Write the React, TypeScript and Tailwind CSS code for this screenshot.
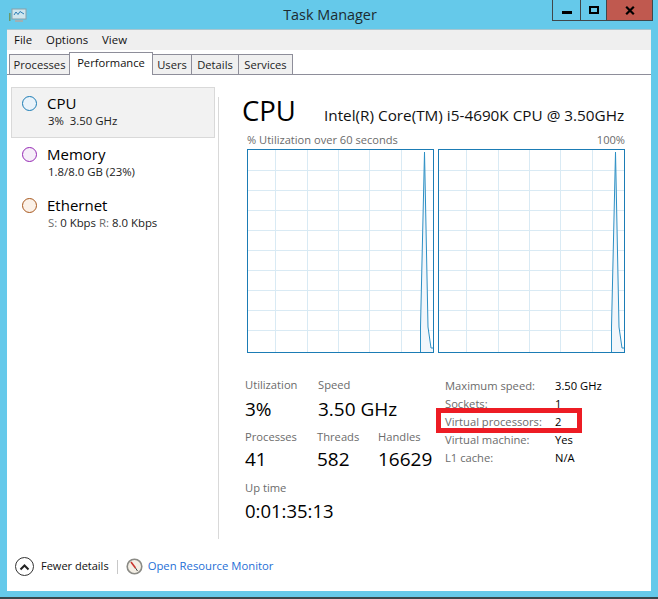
const FONT = "font-['Open_Sans',sans-serif]";

function Chart() {
  const xs = [28, 60, 91, 122, 154];
  const ys = [21, 41, 61, 81, 101, 121, 141, 161, 181];
  return (
    <svg width="187" height="204" viewBox="0 0 187 204" className="block">
      <rect x="0" y="0" width="187" height="204" fill="#ffffff" />
      {xs.map((x) => (
        <line key={x} x1={x + 0.5} x2={x + 0.5} y1="1" y2="203" stroke="#d9eaf4" strokeWidth="1" />
      ))}
      {ys.map((y) => (
        <line key={y} x1="1" x2="186" y1={y + 0.5} y2={y + 0.5} stroke="#d9eaf4" strokeWidth="1" />
      ))}
      <path d="M173.5 203 L173.5 178 L177.5 3 L181 178 L184 199 L186 199 L186 203 Z" fill="#f1f6fb" />
      <path d="M173.5 203 L173.5 178 L177.5 3 L181 178 L184 199 L186 199" fill="none" stroke="#2c8fc4" strokeWidth="1" />
      <rect x="0.5" y="0.5" width="186" height="203" fill="none" stroke="#1b7cb5" strokeWidth="1" />
    </svg>
  );
}

function Ring({ border, fill }: { border: string; fill: string }) {
  return <span className={`w-[15px] h-[15px] rounded-full border-[1.5px] shrink-0 ${border} ${fill}`} />;
}

function SideItem({ ring, title, children, active }: { ring: React.ReactNode; title: string; children: React.ReactNode; active?: boolean }) {
  return (
    <div className={`h-[51px] flex border ${active ? 'bg-[#f2f2f2] border-[#d9d9d9]' : 'border-transparent'}`}>
      <div className="w-[35px] pl-[10px] pt-[8px] flex items-start">{ring}</div>
      <div className="flex flex-col">
        <span className="text-[15px] leading-[20px] mt-[5px] mb-[1px] text-black">{title}</span>
        <span className="text-[11.4px] leading-[14px] ml-[1px] text-[#222] whitespace-nowrap">{children}</span>
      </div>
    </div>
  );
}

function Stat({ label, value, w, size = 'text-[19px]', mt = 'mt-[3px]' }: { label: string; value: string; w?: string; size?: string; mt?: string }) {
  return (
    <div className={`flex flex-col ${w ?? ''}`}>
      <span className="text-[11.2px] leading-[16px] text-[#6b6b6b] whitespace-nowrap">{label}</span>
      <span className={`${size} ${mt} leading-[26px] text-black whitespace-nowrap`}>{value}</span>
    </div>
  );
}

function Spec({ k, v }: { k: string; v: string }) {
  return (
    <div className="flex h-[18px] items-center">
      <span className="w-[110px] text-[#6b6b6b] whitespace-nowrap">{k}</span>
      <span className="text-black whitespace-nowrap">{v}</span>
    </div>
  );
}

function Tab({ label, w }: { label: string; w: string }) {
  return (
    <div className={`${w} h-[20px] mt-[4px] pt-[1px] border border-[#8e8e9a] border-b-0 bg-[#f0f0f0] -ml-px first:ml-0 flex items-center justify-center text-[11.2px] text-[#222]`}>
      {label}
    </div>
  );
}

export default function App() {
  return (
    <div className={`${FONT} relative w-[658px] h-[599px] bg-[#65c9ea] flex flex-col overflow-hidden`}>
      {/* title bar */}
      <div className="h-[29px] shrink-0 flex items-start relative">
        <svg width="18" height="16" viewBox="0 0 18 16" className="ml-[9px] mt-[8px]">
          <rect x="3" y="1" width="14" height="10" fill="#cfe6ee" stroke="#8aa0a8" />
          <path d="M5 7 L7 4 L9 6.5 L11 3.5 L15 6" fill="none" stroke="#2f7fb5" />
          <rect x="6" y="12" width="8" height="2" fill="#9fb0b5" />
          <rect x="0" y="5" width="1.5" height="8" fill="#6a9a6a" />
        </svg>
        <div className="flex-1 text-center text-[14.4px] leading-[29px] text-[#1c2b30] pl-[81px]">Task Manager</div>
        <div className="flex h-[21px] w-[101px] mr-[5px] border border-t-0 border-[#40474a] shrink-0">
          <div className="w-[28px] border-r border-[#40474a] flex items-center justify-center">
            <span className="w-[10px] h-[3px] bg-black mt-[5px]" />
          </div>
          <div className="w-[26px] border-r border-[#40474a] flex items-center justify-center">
            <span className="w-[10px] h-[8px] border-2 border-black" />
          </div>
          <div className="flex-1 bg-[#c0594f] flex items-center justify-center">
            <svg width="10" height="9" viewBox="0 0 10 9"><path d="M1.2 0.8 L8.8 8.2 M8.8 0.8 L1.2 8.2" stroke="#000" strokeWidth="2.2" /></svg>
          </div>
        </div>
      </div>

      {/* window body */}
      <div className="mx-[7px] w-[644px] h-[562px] bg-white flex flex-col border-t border-[#a9c6d0]">
        {/* menu */}
        <div className="h-[20px] bg-[#efefef] flex items-center pl-[7px] gap-[14px] text-[11.4px] text-[#111] shrink-0">
          <span>File</span>
          <span>Options</span>
          <span>View</span>
        </div>
        {/* tabs */}
        <div className="h-[25px] shrink-0 flex items-start relative border-b border-[#8e8e9a] pl-[2px]">
          <Tab label="Processes" w="w-[61px]" />
          <div className="w-[84px] h-[23px] -ml-px mt-[2px] border border-[#8e8e9a] border-b-0 bg-white flex items-center justify-center text-[11.2px] text-[#111] relative z-10 pb-[2px]">
            Performance
          </div>
          <Tab label="Users" w="w-[40px]" />
          <Tab label="Details" w="w-[48px]" />
          <Tab label="Services" w="w-[55px]" />
        </div>

        {/* main */}
        <div className="flex flex-1 min-h-0">
          <div className="w-[211px] shrink-0 pl-[4px] pr-[3px] pt-[12px] flex flex-col">
            <SideItem active ring={<Ring border="border-[#1b7cb5]" fill="bg-[#eaf3fa]" />} title="CPU">3%&nbsp; 3.50 GHz</SideItem>
            <SideItem ring={<Ring border="border-[#9528b4]" fill="bg-[#f6eef9]" />} title="Memory">1.8/8.0 GB (23%)</SideItem>
            <SideItem ring={<Ring border="border-[#a7571d]" fill="bg-[#fbf1e8]" />} title="Ethernet">
              <span className="text-[#6b6b6b]">S:</span> 0 Kbps <span className="text-[#6b6b6b]">R:</span> 8.0 Kbps
            </SideItem>
          </div>
          <div className="w-px h-[442px] mt-[22px] bg-[#d9d9d9] shrink-0" />

          <div className="flex-1 pl-[25px] pt-[20px] relative">
            <div className="flex items-baseline h-[38px] -mt-[3px] mb-[3px] -ml-[2px]">
              <span className="text-[27.5px] leading-[38px] text-black w-[82px]">CPU</span>
              <span className="text-[15.3px] text-[#111] whitespace-nowrap">Intel(R) Core(TM) i5-4690K CPU @ 3.50GHz</span>
            </div>
            <div className="flex justify-between w-[381px] text-[11.1px] leading-[14px] text-[#6b6b6b] h-[14px] pl-[3px]">
              <span>% Utilization over 60 seconds</span>
              <span>100%</span>
            </div>
            <div className="flex gap-[4px] ml-[3px] mt-[2px]">
              <Chart />
              <Chart />
            </div>

            <div className="flex mt-[24px] ml-[1px]">
              <div className="w-[200px] flex flex-col">
                <div className="flex mb-[7px]">
                  <Stat label="Utilization" value="3%" w="w-[73px]" />
                  <Stat label="Speed" value="3.50 GHz" />
                </div>
                <div className="flex mb-[8px]">
                  <Stat label="Processes" value="41" w="w-[72px]" mt="mt-[1px]" />
                  <Stat label="Threads" value="582" w="w-[61px]" mt="mt-[1px]" />
                  <Stat label="Handles" value="16629" mt="mt-[1px]" />
                </div>
                <Stat label="Up time" value="0:01:35:13" size="text-[18.5px]" mt="mt-[2px]" />
              </div>
              <div className="text-[11.2px] leading-[18px] flex flex-col">
                <Spec k="Maximum speed:" v="3.50 GHz" />
                <Spec k="Sockets:" v="1" />
                <Spec k="Virtual processors:" v="2" />
                <Spec k="Virtual machine:" v="Yes" />
                <Spec k="L1 cache:" v="N/A" />
              </div>
            </div>
          </div>
        </div>

        {/* footer */}
        <div className="h-[52px] shrink-0 flex items-center pl-[8px] text-[11px] pt-[3px]">
          <span className="w-[19px] h-[19px] rounded-full border border-[#333] flex items-center justify-center mr-[7px] shrink-0">
            <svg width="11" height="8" viewBox="0 0 11 8"><path d="M1.5 6.5 L5.5 2.5 L9.5 6.5" fill="none" stroke="#222" strokeWidth="2" /></svg>
          </span>
          <span className="text-[#111]">Fewer details</span>
          <span className="w-px h-[14px] bg-[#c8c8c8] mx-[8px]" />
          <svg width="17" height="17" viewBox="0 0 17 17" className="mr-[5px]">
            <circle cx="8.5" cy="8.5" r="7.3" fill="#f3eee4" stroke="#8a8a85" strokeWidth="1.6" />
            <path d="M5 4 L9.5 10" stroke="#c8332b" strokeWidth="1.6" />
            <path d="M9.5 10 L11.5 13" stroke="#444" strokeWidth="1" />
          </svg>
          <span className="text-[11.3px] text-[#1f6fd6]">Open Resource Monitor</span>
        </div>
      </div>

      {/* annotation */}
      <div className="absolute left-[436px] top-[408px] w-[146px] h-[25px] border-[5px] border-[#ed1c24]" />
      <div className="absolute left-0 right-0 bottom-0 h-[2px] bg-[#37474d]" />
    </div>
  );
}
